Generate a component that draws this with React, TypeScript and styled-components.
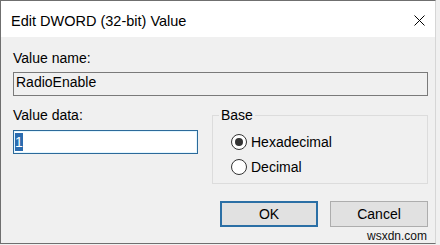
import React from "react";
import styled, { createGlobalStyle } from "styled-components";

const GlobalStyle = createGlobalStyle`
  html, body {
    margin: 0;
    padding: 0;
    background: #f0f0f0;
  }
  body {
    font-family: "Liberation Sans", Arial, sans-serif;
    font-size: 14px;
    color: #000;
  }
`;

const Window = styled.div`
  position: relative;
  box-sizing: border-box;
  width: 436px;
  height: 244px;
  border: 1px solid #6f6f6f;
  border-right-color: #d6d6d6;
  background: #f0f0f0;
  display: flex;
  flex-direction: column;
`;

const TitleBar = styled.div`
  height: 36px;
  box-sizing: border-box;
  padding: 3px 10px 0 10px;
  background: #fff;
  display: flex;
  align-items: center;
  justify-content: space-between;
`;

const Title = styled.span`
  font-size: 14.5px;
  line-height: 18px;
`;

const CloseIcon = styled.svg`
  width: 11px;
  height: 11px;
  display: block;
`;

const Body = styled.div`
  flex: 1;
  padding: 13px 7px 0 12px;
  display: flex;
  flex-direction: column;
`;

const Label = styled.div`
  line-height: 16px;
  height: 16px;
`;

const Field = styled.div<{ $focused?: boolean }>`
  box-sizing: border-box;
  height: 24px;
  margin-top: ${(p) => (p.$focused ? "7px" : "6px")};
  padding: ${(p) => (p.$focused ? "2px 1px 0" : "0 2px")};
  line-height: 18px;
  border: 1px solid ${(p) => (p.$focused ? "#2c6a9a" : "#7a7a7a")};
  background: ${(p) => (p.$focused ? "#fff" : "#f0f0f0")};
  box-shadow: ${(p) => (p.$focused ? "inset 0 0 0 1px #e3f6ff" : "none")};
  white-space: nowrap;
  overflow: hidden;
`;

const Selected = styled.span`
  display: inline-block;
  background: #2a6cb0;
  color: #fff;
  line-height: 18px;
`;

const DataRow = styled.div`
  margin-top: 11px;
  display: grid;
  grid-template-columns: 185px 1fr;
  column-gap: 14px;
  align-items: start;
`;

const Column = styled.div`
  display: flex;
  flex-direction: column;
`;

const GroupBox = styled.fieldset`
  margin: 0;
  min-width: 0;
  padding: 6px 6px 4px 6px;
  border: 1px solid #dcdcdc;
`;

const Legend = styled.legend`
  padding: 0 2px;
  line-height: 16px;
`;

const RadioList = styled.div`
  margin-left: 12px;
  display: flex;
  flex-direction: column;
`;

const RadioRow = styled.label`
  height: 25px;
  display: flex;
  align-items: center;
  gap: 4px;
`;

const RadioCircle = styled.span<{ $checked?: boolean }>`
  box-sizing: border-box;
  width: 16px;
  height: 16px;
  border-radius: 50%;
  border: 1px solid #333;
  background: #fff;
  display: flex;
  align-items: center;
  justify-content: center;

  &::after {
    content: "";
    width: 8px;
    height: 8px;
    border-radius: 50%;
    background: #333;
    display: ${(p) => (p.$checked ? "block" : "none")};
  }
`;

const Buttons = styled.div`
  margin-top: 17px;
  display: flex;
  justify-content: flex-end;
  gap: 12px;
`;

const Button = styled.button<{ $default?: boolean }>`
  box-sizing: border-box;
  width: 98px;
  height: 26px;
  padding: 0;
  font-family: inherit;
  font-size: 14px;
  color: #000;
  background: #e1e1e1;
  border: ${(p) => (p.$default ? "2px solid #2b6fa5" : "1px solid #adadad")};
`;

const Watermark = styled.span`
  position: absolute;
  right: 8px;
  bottom: 0;
  font-size: 12px;
  line-height: 14px;
  color: #111;
`;

export default function App() {
  return (
    <>
      <GlobalStyle />
      <Window>
        <TitleBar>
          <Title>Edit DWORD (32-bit) Value</Title>
          <CloseIcon viewBox="0 0 11 11">
            <path d="M0.5 0.5 L10.5 10.5 M10.5 0.5 L0.5 10.5" stroke="#000" strokeWidth="1" />
          </CloseIcon>
        </TitleBar>
        <Body>
          <Label>Value name:</Label>
          <Field>RadioEnable</Field>
          <DataRow>
            <Column>
              <Label>Value data:</Label>
              <Field $focused>
                <Selected>1</Selected>
              </Field>
            </Column>
            <GroupBox>
              <Legend>Base</Legend>
              <RadioList>
                <RadioRow>
                  <RadioCircle $checked />
                  Hexadecimal
                </RadioRow>
                <RadioRow>
                  <RadioCircle />
                  Decimal
                </RadioRow>
              </RadioList>
            </GroupBox>
          </DataRow>
          <Buttons>
            <Button $default>OK</Button>
            <Button>Cancel</Button>
          </Buttons>
        </Body>
        <Watermark>wsxdn.com</Watermark>
      </Window>
    </>
  );
}
